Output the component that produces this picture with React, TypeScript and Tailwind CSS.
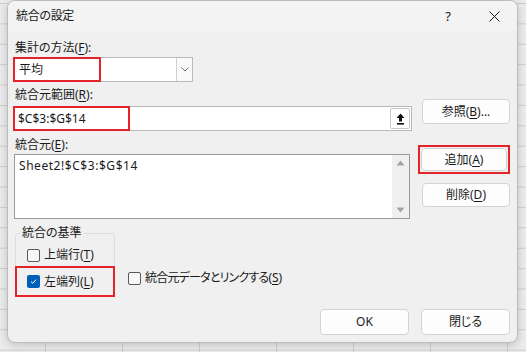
import React from 'react';

const U = ({ c }: { c: string }) => <span className="underline underline-offset-2">{c}</span>;

const Btn = ({ children, className = '' }: { children: React.ReactNode; className?: string }) => (
  <div
    className={`flex items-center justify-center bg-[#fdfdfd] border border-[#d3d3d3] rounded-[4px] text-[#1a1a1a] ${className}`}
  >
    {children}
  </div>
);

const Check = ({ checked = false }: { checked?: boolean }) =>
  checked ? (
    <div className="w-[13px] h-[13px] rounded-[2px] bg-[#005fb8] flex items-center justify-center">
      <svg width="9" height="9" viewBox="0 0 9 9">
        <path d="M2 4.6 L3.8 6.3 L7 2.6" stroke="#fff" strokeWidth="1" fill="none" />
      </svg>
    </div>
  ) : (
    <div className="w-[13px] h-[13px] rounded-[2px] border border-[#5a5a5a] bg-[#f7f7f7]" />
  );

export default function App() {
  return (
    <div className="w-[526px] h-[352px] overflow-hidden bg-[#ebebeb] bg-[image:linear-gradient(to_right,#cdcdcd_1px,transparent_1px),linear-gradient(to_bottom,#cdcdcd_1px,transparent_1px)] bg-[size:77px_20.4px] bg-[position:45px_3px] font-['Noto_Sans','Noto_Sans_CJK_JP',sans-serif] [font-feature-settings:'palt'] text-[12px] leading-[18px] text-[#1a1a1a]">
      <div className="ml-[7px] w-[511px] h-[343px] bg-[#f0f0f0] border border-[#bcbcbc] rounded-[8px] shadow-[0_2px_8px_rgba(0,0,0,0.18)] overflow-hidden flex flex-col">
        {/* title bar */}
        <div className="h-[30px] shrink-0 bg-[#f3f3f3] flex items-center">
          <span className="pl-[8px] text-[12px] tracking-[-0.3px]">統合の設定</span>
          <div className="ml-auto flex h-full">
            <div className="w-[46px] flex items-center justify-center text-[13px]">?</div>
            <div className="w-[46px] flex items-center justify-center">
              <svg width="11" height="11" viewBox="0 0 11 11">
                <path d="M0.5 0.5 L10.5 10.5 M10.5 0.5 L0.5 10.5" stroke="#1a1a1a" strokeWidth="1" />
              </svg>
            </div>
          </div>
        </div>

        <div className="flex pl-[5px] pr-[7px]">
          {/* left column */}
          <div className="w-[399px] flex flex-col">
            <div className="mt-[8px] h-[18px] pl-[2px]">
              集計の方法(<U c="F" />):
            </div>
            <div className="w-[180px] h-[25px] flex bg-white border border-[#b9b9b9]">
              <div className="w-[88px] -m-[1px] h-[25px] border-2 border-[#e5242a] flex items-center pl-[4px]">
                平均
              </div>
              <div className="ml-auto w-[16px] border-l border-[#d0d0d0] bg-[#fafafa] flex items-center justify-center">
                <svg width="8" height="5" viewBox="0 0 8 5">
                  <path d="M0.5 0.5 L4 4 L7.5 0.5" stroke="#707070" strokeWidth="1" fill="none" />
                </svg>
              </div>
            </div>

            <div className="mt-[4px] h-[18px] pl-[2px]">
              統合元範囲(<U c="R" />):
            </div>
            <div className="mt-[2px] h-[25px] flex bg-white border border-[#b9b9b9]">
              <div className="w-[117px] -m-[1px] h-[25px] border-2 border-[#e5242a] flex items-center pl-[3px]">
                $C$3:$G$14
              </div>
              <div className="ml-auto mr-[1px] my-[1px] w-[20px] border border-[#c8c8c8] rounded-[2px] bg-white flex items-center justify-center">
                <svg width="9" height="12" viewBox="0 0 9 12">
                  <path d="M4.5 0.5 L8.5 5 L6 5 L6 8.5 L3 8.5 L3 5 L0.5 5 Z" fill="#111" />
                  <rect x="1" y="10" width="7" height="1.6" fill="#111" />
                </svg>
              </div>
            </div>

            <div className="mt-[5px] h-[18px] pl-[2px]">
              統合元(<U c="E" />):
            </div>
            <div className="ml-[1px] w-[396px] h-[65px] flex bg-white border border-[#9a9a9a]">
              <div className="flex-1 pl-[4px] pt-[2px] tracking-[0.55px]">Sheet2!$C$3:$G$14</div>
              <div className="w-[17px] bg-[#f0f0f0] flex flex-col items-center justify-between py-[5px]">
                <svg width="9" height="6" viewBox="0 0 9 6">
                  <path d="M4.5 0.5 L8.5 5.5 L0.5 5.5 Z" fill="#a3a3a3" />
                </svg>
                <svg width="9" height="6" viewBox="0 0 9 6">
                  <path d="M0.5 0.5 L8.5 0.5 L4.5 5.5 Z" fill="#a3a3a3" />
                </svg>
              </div>
            </div>

            <div className="flex items-start">
              <fieldset className="mt-[5px] ml-[2px] w-[100px] border border-[#dcdcdc] rounded-[3px] p-0">
                <legend className="ml-[4px] px-[2px] h-[18px]">統合の基準</legend>
                <div className="mt-[4px] h-[18px] flex items-center pl-[11px] gap-[4px]">
                  <Check />
                  <span>
                    上端行(<U c="T" />)
                  </span>
                </div>
                <div className="mt-[2px] -mx-[1px] -mb-[1px] h-[31px] border-2 border-[#e5242a] flex items-center pl-[10px] gap-[4px]">
                  <Check checked />
                  <span>
                    左端列(<U c="L" />)
                  </span>
                </div>
              </fieldset>
              <div className="mt-[50px] ml-[13px] h-[18px] flex items-center gap-[4px]">
                <Check />
                <span>
                  <span className="tracking-[-0.8px]">統合元データとリンクする</span>(<U c="S" />)
                </span>
              </div>
            </div>
          </div>

          {/* right column */}
          <div className="ml-[10px] w-[88px] flex flex-col">
            <div className="mt-[68px]">
              <Btn className="h-[25px]">
                参照(<U c="B" />)...
              </Btn>
            </div>
            <div className="mt-[21px] -ml-[4px] w-[92px] h-[29px] border-2 border-[#e5242a] p-[1px] pl-[1px]">
              <Btn className="h-full">
                追加(<U c="A" />)
              </Btn>
            </div>
            <div className="mt-[9px]">
              <Btn className="h-[24px]">
                削除(<U c="D" />)
              </Btn>
            </div>
          </div>
        </div>

        <div className="mt-[12px] flex justify-end gap-[12px] pr-[7px]">
          <Btn className="w-[89px] h-[26px] border-[#2a7bd1]">OK</Btn>
          <Btn className="w-[89px] h-[26px]">閉じる</Btn>
        </div>
      </div>
    </div>
  );
}
